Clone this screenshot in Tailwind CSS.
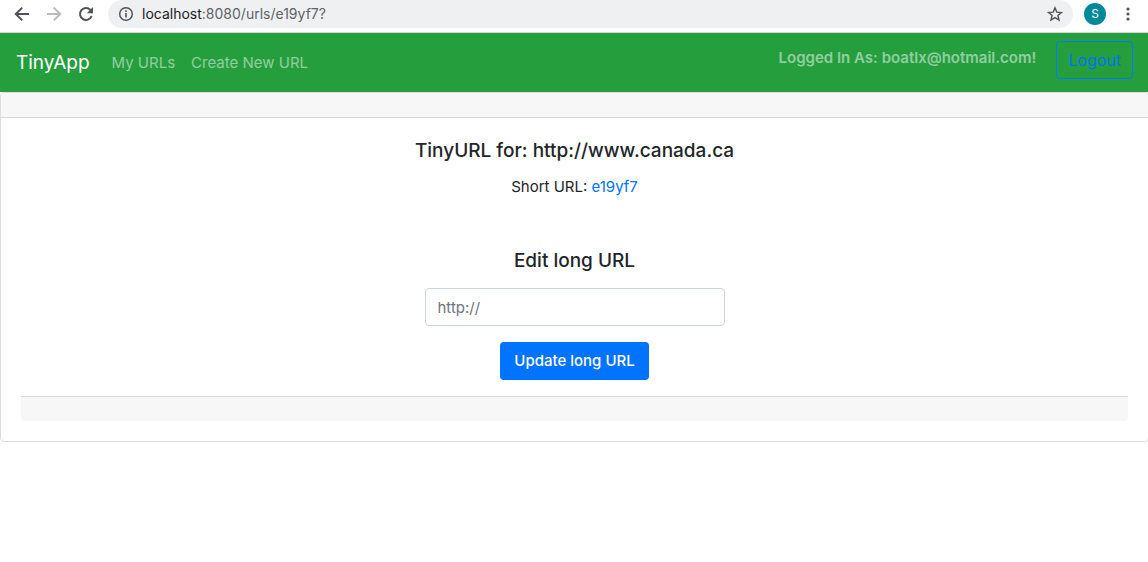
<!DOCTYPE html>
<html lang="en">
<head>
<meta charset="utf-8">
<meta name="viewport" content="width=device-width, initial-scale=1">
<title>TinyApp</title>
<script src="https://cdn.jsdelivr.net/npm/@tailwindcss/browser@4"></script>
</head>
<body class="min-h-screen overflow-x-hidden bg-white font-[Inter,sans-serif] text-[15px] leading-[26px] text-[#212529]">
  <div class="flex h-[33px] items-start border-b border-[#d5d6d8] bg-white">
    <div class="flex h-7 items-center gap-3 pl-3 text-[#505357]">
      <button type="button" aria-label="Back"><svg class="size-5" viewBox="0 0 20 20" fill="none" stroke="currentColor" stroke-width="2"><path d="M17 10H4M10.200 3.600L3.800 10l6.400 6.400"/></svg></button>
      <button type="button" aria-label="Forward" class="text-[#b9babc]"><svg class="size-5" viewBox="0 0 20 20" fill="none" stroke="currentColor" stroke-width="2"><path d="M3 10h13M9.800 3.600L16.200 10l-6.400 6.400"/></svg></button>
      <button type="button" aria-label="Reload"><svg class="size-5" viewBox="0 0 20 20"><path d="M15.600 12.200A6 6 0 1 1 14.500 6" fill="none" stroke="currentColor" stroke-width="2"/><path d="M17 3v6.200h-6.200z" fill="currentColor"/></svg></button>
    </div>
    <div class="ml-3 flex h-7 flex-1 items-center rounded-r-full rounded-bl-full rounded-tl-full bg-[#eff0f2] pr-2 pl-[10px] text-sm text-[#5f6368]">
      <svg class="mr-2 size-4" viewBox="0 0 16 16" fill="none" stroke="#505357"><circle cx="8" cy="8" r="6.300" stroke-width="1.500"/><path d="M8 7v4.500M8 4.300v1.600" stroke-width="1.600"/></svg>
      <span class="flex-1"><span class="text-[#202124]">localhost</span>:8080/urls/e19yf7?</span>
      <button type="button" aria-label="Bookmark this page"><svg class="size-5" viewBox="0 0 20 20" fill="none" stroke="#505357" stroke-width="1.400"><path d="M10 3.900l1.800 4.200 4.600.4-3.500 3 1.100 4.500-4-2.400-4 2.400 1.100-4.500-3.500-3 4.600-.4z"/></svg></button>
    </div>
    <div class="flex h-7 items-center gap-[14px] pr-3 pl-[11px]">
      <button type="button" aria-label="Profile" class="flex size-[22px] items-center justify-center rounded-full bg-[#00899b] text-xs text-white">S</button>
      <button type="button" aria-label="Menu"><svg class="h-5 w-4" viewBox="0 0 16 20" fill="#505357"><circle cx="8" cy="5" r="1.600"/><circle cx="8" cy="10" r="1.600"/><circle cx="8" cy="15" r="1.600"/></svg></button>
    </div>
  </div>

  <nav class="flex items-start justify-between bg-[#259e3d] pr-[15px] pl-4">
    <div class="flex h-[59px] items-center pt-px text-white/50">
      <a href="#" class="mr-[22px] text-[19px] text-white">TinyApp</a>
      <a href="#" class="mr-4">My URLs</a>
      <a href="#">Create New URL</a>
    </div>
    <div class="flex pt-2">
      <span class="mt-1 mr-5 font-semibold text-white/50">Logged In As: boatlx@hotmail.com!</span>
      <button type="button" class="h-[38px] rounded border border-[#007bff] px-[11px] text-base text-[#0073ff]">Logout</button>
    </div>
  </nav>

  <main class="-mr-px rounded border border-[#dcdcdc] text-center">
    <div class="h-[25px] rounded-t border-b border-[#d8d8d8] bg-[#f7f7f7]"></div>
    <div class="p-5">
      <h1 class="text-[19px] font-medium">TinyURL for: http://www.canada.ca</h1>
      <p class="mt-[10px]">Short URL: <a href="#" class="text-[#0073ff]">e19yf7</a></p>
      <form class="mt-12 flex flex-col items-center">
        <label for="long-url" class="text-[19px] font-medium">Edit long URL</label>
        <input id="long-url" type="text" placeholder="http://" class="mt-[14px] h-[38px] w-[300px] rounded border border-[#ced4da] px-3 placeholder:text-[#6c757d]">
        <button type="button" class="mt-4 h-[38px] rounded bg-[#0073ff] px-[14px] font-medium text-white">Update long URL</button>
      </form>
      <div class="mt-4 h-[25px] rounded-b border-t border-[#d8d8d8] bg-[#f7f7f7]"></div>
    </div>
  </main>
</body>
</html>
